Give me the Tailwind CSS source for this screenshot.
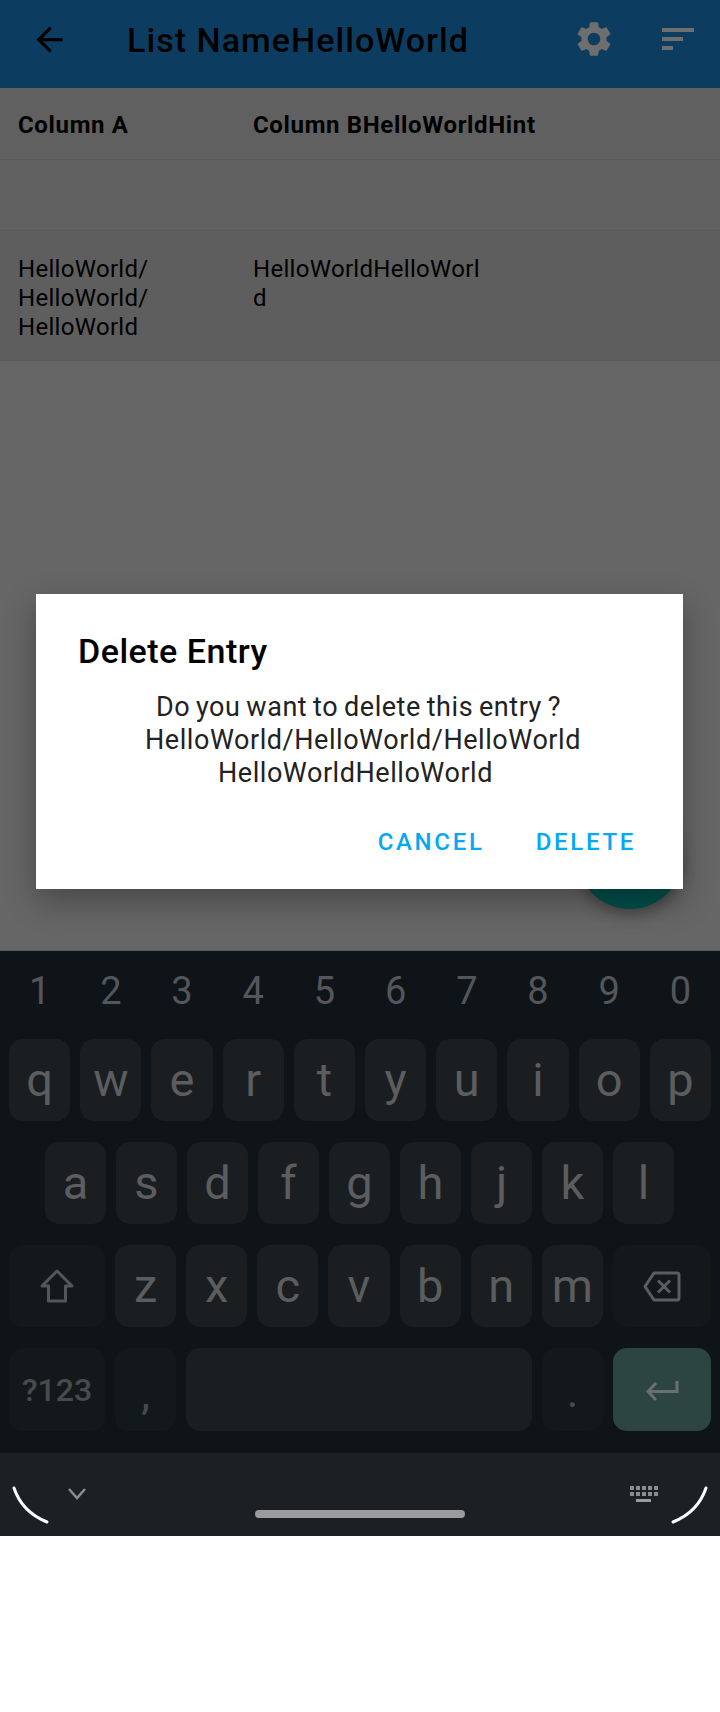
<!DOCTYPE html>
<html lang="en">
<head>
    <meta charset="UTF-8">
    <meta name="viewport" content="width=device-width, initial-scale=1.0">
    <title>List Name</title>
    <script src="https://cdn.jsdelivr.net/npm/@tailwindcss/browser@4"></script>
</head>
<body class="bg-white font-['Roboto',sans-serif]">
    <div class="w-[720px] h-[1712px] flex flex-col overflow-hidden">
        <!-- app, dimmed by the dialog scrim -->
        <div class="relative h-[950px] bg-[#666666] shrink-0">
            <div class="h-[88px] bg-[#0d3c61] flex items-center text-black">
                <svg class="ml-[30px] w-[39px] h-[39px] -mt-[10px]" viewBox="0 0 24 24" fill="#000"><path d="M20 11H7.83l5.59-5.59L12 4l-8 8 8 8 1.41-1.41L7.83 13H20v-2z"/></svg>
                <h1 class="ml-[58px] -mt-[7px] text-[34px] font-medium tracking-[1.05px]">List NameHelloWorld</h1>
                <svg class="ml-auto w-[42px] h-[42px] -mt-[10px]" viewBox="0 0 24 24" fill="#6e6e6e"><path d="M19.14 12.94c.04-.3.06-.61.06-.94 0-.32-.02-.64-.07-.94l2.03-1.58c.18-.14.23-.41.12-.61l-1.92-3.32c-.12-.22-.37-.29-.59-.22l-2.39.96c-.5-.38-1.03-.7-1.62-.94l-.36-2.54c-.04-.24-.24-.41-.48-.41h-3.84c-.24 0-.43.17-.47.41l-.36 2.54c-.59.24-1.13.57-1.62.94l-2.39-.96c-.22-.08-.47 0-.59.22L2.74 8.87c-.12.21-.08.47.12.61l2.03 1.58c-.05.3-.09.63-.09.94s.02.64.07.94l-2.03 1.58c-.18.14-.23.41-.12.61l1.92 3.32c.12.22.37.29.59.22l2.39-.96c.5.38 1.03.7 1.62.94l.36 2.54c.05.24.24.41.48.41h3.84c.24 0 .44-.17.47-.41l.36-2.54c.59-.24 1.13-.56 1.62-.94l2.39.96c.22.08.47 0 .59-.22l1.92-3.32c.12-.22.07-.47-.12-.61l-2.01-1.58zM12 15.6c-1.98 0-3.6-1.62-3.6-3.6s1.62-3.6 3.6-3.6 3.6 1.62 3.6 3.6-1.62 3.6-3.6 3.6z"/></svg>
                <div class="ml-[47px] mr-[26px] -mt-[10px] w-[32px] flex flex-col gap-[5px]">
                    <div class="h-[4px] w-[32px] bg-[#6e6e6e]"></div>
                    <div class="h-[4px] w-[21px] bg-[#6e6e6e]"></div>
                    <div class="h-[4px] w-[11px] bg-[#6e6e6e]"></div>
                </div>
            </div>

            <div class="h-[72px] pt-[2px] bg-[#606060] border-b border-[#585858] flex items-center text-black text-[24px] font-bold tracking-[0.65px]">
                <div class="w-[253px] pl-[18px]">Column A</div>
                <div>Column BHelloWorldHint</div>
            </div>
            <div class="h-[71px] bg-[#606060] border-b border-[#585858]"></div>
            <div class="h-[130px] pt-[6px] bg-[#5e5e5e] border-b border-[#565656] flex items-center text-black text-[24px] leading-[29px] tracking-[0.3px]">
                <div class="w-[253px] pl-[18px]">HelloWorld/<br>HelloWorld/<br>HelloWorld</div>
                <div class="-mt-[29px]">HelloWorldHelloWorl<br>d</div>
            </div>

            <div class="absolute left-[577px] top-[803px] w-[106px] h-[106px] rounded-full bg-[#004f49] shadow-[0_6px_14px_rgba(0,0,0,0.3)]"></div>

            <div class="absolute left-[36px] top-[594px] w-[647px] h-[295px] bg-white shadow-[0_12px_30px_rgba(0,0,0,0.3)]">
                <h2 class="pl-[42px] pt-[37px] text-[34px] leading-[40px] font-medium tracking-[0.5px] text-black">Delete Entry</h2>
                <div class="mt-[20px] pl-[7px] text-center text-[27px] leading-[33px] tracking-[0.55px] text-[#222222]">
                    <p class="pr-[9px] [word-spacing:-1.4px]">Do you want to delete this entry ?</p>
                    <p>HelloWorld/HelloWorld/HelloWorld</p>
                    <p class="pr-[15px]">HelloWorldHelloWorld</p>
                </div>
                <div class="mt-[37px] flex justify-end gap-[51px] pr-[47px] text-[24px] leading-[30px] font-medium tracking-[2.7px] text-[#03a9f4]">
                    <span>CANCEL</span>
                    <span>DELETE</span>
                </div>
            </div>
        </div>

        <!-- keyboard -->
        <div class="h-[503px] shrink-0 bg-[#0e1417] border-t border-[#55585a] text-[#5b5d5e]">
            <div class="h-[88px] px-[9px] pt-[15px] flex gap-[10px] text-[38px] leading-[50px] text-[#54575a]">
                <span class="flex-1 text-center">1</span><span class="flex-1 text-center">2</span><span class="flex-1 text-center">3</span><span class="flex-1 text-center">4</span><span class="flex-1 text-center">5</span><span class="flex-1 text-center">6</span><span class="flex-1 text-center">7</span><span class="flex-1 text-center">8</span><span class="flex-1 text-center">9</span><span class="flex-1 text-center">0</span>
            </div>
            <div class="px-[9px] flex gap-[10px] text-[47px] h-[82px]">
                <div class="flex-1 flex items-center justify-center rounded-[14px] bg-[#1a1e21]">q</div>
                <div class="flex-1 flex items-center justify-center rounded-[14px] bg-[#1a1e21]">w</div>
                <div class="flex-1 flex items-center justify-center rounded-[14px] bg-[#1a1e21]">e</div>
                <div class="flex-1 flex items-center justify-center rounded-[14px] bg-[#1a1e21]">r</div>
                <div class="flex-1 flex items-center justify-center rounded-[14px] bg-[#1a1e21]">t</div>
                <div class="flex-1 flex items-center justify-center rounded-[14px] bg-[#1a1e21]">y</div>
                <div class="flex-1 flex items-center justify-center rounded-[14px] bg-[#1a1e21]">u</div>
                <div class="flex-1 flex items-center justify-center rounded-[14px] bg-[#1a1e21]">i</div>
                <div class="flex-1 flex items-center justify-center rounded-[14px] bg-[#1a1e21]">o</div>
                <div class="flex-1 flex items-center justify-center rounded-[14px] bg-[#1a1e21]">p</div>
            </div>
            <div class="mt-[21px] pl-[45px] pr-[46px] flex gap-[10px] text-[47px] h-[82px]">
                <div class="flex-1 flex items-center justify-center rounded-[14px] bg-[#1a1e21]">a</div>
                <div class="flex-1 flex items-center justify-center rounded-[14px] bg-[#1a1e21]">s</div>
                <div class="flex-1 flex items-center justify-center rounded-[14px] bg-[#1a1e21]">d</div>
                <div class="flex-1 flex items-center justify-center rounded-[14px] bg-[#1a1e21]">f</div>
                <div class="flex-1 flex items-center justify-center rounded-[14px] bg-[#1a1e21]">g</div>
                <div class="flex-1 flex items-center justify-center rounded-[14px] bg-[#1a1e21]">h</div>
                <div class="flex-1 flex items-center justify-center rounded-[14px] bg-[#1a1e21]">j</div>
                <div class="flex-1 flex items-center justify-center rounded-[14px] bg-[#1a1e21]">k</div>
                <div class="flex-1 flex items-center justify-center rounded-[14px] bg-[#1a1e21]">l</div>
            </div>
            <div class="mt-[21px] px-[9px] flex gap-[10px] text-[47px] h-[82px]">
                <div class="w-[96px] flex items-center justify-center rounded-[14px] bg-[#13181b]">
                    <svg width="34" height="34" viewBox="0 0 34 34" fill="none" stroke="#54575a" stroke-width="3" stroke-linejoin="round"><path d="M17 2 L32 17 H25.5 V32 H8.5 V17 H2 Z"/></svg>
                </div>
                <div class="flex-1 flex items-center justify-center rounded-[14px] bg-[#1a1e21]">z</div>
                <div class="flex-1 flex items-center justify-center rounded-[14px] bg-[#1a1e21]">x</div>
                <div class="flex-1 flex items-center justify-center rounded-[14px] bg-[#1a1e21]">c</div>
                <div class="flex-1 flex items-center justify-center rounded-[14px] bg-[#1a1e21]">v</div>
                <div class="flex-1 flex items-center justify-center rounded-[14px] bg-[#1a1e21]">b</div>
                <div class="flex-1 flex items-center justify-center rounded-[14px] bg-[#1a1e21]">n</div>
                <div class="flex-1 flex items-center justify-center rounded-[14px] bg-[#1a1e21]">m</div>
                <div class="w-[98px] flex items-center justify-center rounded-[14px] bg-[#13181b]">
                    <svg width="38" height="31" viewBox="0 0 38 31" fill="none" stroke="#5b5d5e" stroke-width="3" stroke-linejoin="round"><path d="M11 2 H34 Q36 2 36 4 V27 Q36 29 34 29 H11 L2 15.5 Z"/><path d="M15 9.5 L27 21.5 M27 9.5 L15 21.5"/></svg>
                </div>
            </div>
            <div class="mt-[21px] px-[9px] flex gap-[10px] h-[83px] text-[#484b4d]">
                <div class="w-[96px] flex items-center justify-center rounded-[14px] bg-[#13181b] text-[32px] font-medium">?123</div>
                <div class="w-[61px] flex items-end justify-center pb-[22px] rounded-[14px] bg-[#13181b] text-[44px] leading-[30px]">,</div>
                <div class="flex-1 rounded-[14px] bg-[#1a1e21]"></div>
                <div class="w-[61px] flex items-end justify-center pb-[24px] rounded-[14px] bg-[#13181b] text-[44px] leading-[30px]">.</div>
                <div class="w-[98px] pt-[4px] flex items-center justify-center rounded-[14px] bg-[#2d4541]">
                    <svg width="34" height="21" viewBox="0 0 34 21" fill="none" stroke="#6b6f6e" stroke-width="3"><path d="M32 0 V10.5 H3 M11 2 L3 10.5 L11 19"/></svg>
                </div>
            </div>
            <div class="mt-[22px] h-[83px] bg-[#1c2022] relative">
                <svg class="absolute left-[12px] top-[33px]" width="38" height="38" viewBox="0 0 38 38" fill="none" stroke="#ffffff" stroke-width="3" stroke-linecap="round"><path d="M2 2 Q10 26 35 36"/></svg>
                <svg class="absolute left-[68px] top-[35px]" width="18" height="12" viewBox="0 0 18 12" fill="none" stroke="#8a8c8d" stroke-width="2.5"><path d="M1 1 L9 10 L17 1"/></svg>
                <div class="absolute left-[255px] top-[57px] w-[210px] h-[8px] rounded-full bg-[#9a9c9c]"></div>
                <div class="absolute left-[630px] top-[33px] w-[27px] flex flex-col items-center gap-[2px]">
                    <div class="flex gap-[2px]"><i class="w-[4px] h-[4px] bg-[#8a8c8d]"></i><i class="w-[4px] h-[4px] bg-[#8a8c8d]"></i><i class="w-[4px] h-[4px] bg-[#8a8c8d]"></i><i class="w-[4px] h-[4px] bg-[#8a8c8d]"></i><i class="w-[4px] h-[4px] bg-[#8a8c8d]"></i></div>
                    <div class="flex gap-[2px]"><i class="w-[4px] h-[4px] bg-[#8a8c8d]"></i><i class="w-[4px] h-[4px] bg-[#8a8c8d]"></i><i class="w-[4px] h-[4px] bg-[#8a8c8d]"></i><i class="w-[4px] h-[4px] bg-[#8a8c8d]"></i><i class="w-[4px] h-[4px] bg-[#8a8c8d]"></i></div>
                    <div class="w-[15px] h-[3px] mt-[1px] bg-[#9a9c9c]"></div>
                </div>
                <svg class="absolute left-[670px] top-[33px]" width="38" height="38" viewBox="0 0 38 38" fill="none" stroke="#ffffff" stroke-width="3" stroke-linecap="round"><path d="M36 2 Q28 26 3 36"/></svg>
            </div>
        </div>
    </div>
</body>
</html>
